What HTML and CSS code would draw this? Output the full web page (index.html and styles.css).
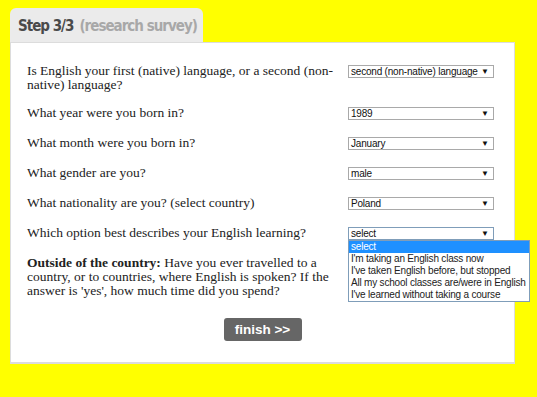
FILE: index.html
```html
<!DOCTYPE html>
<html>
<head>
<meta charset="utf-8">
<link rel="stylesheet" href="styles.css">
</head>
<body>
<div class="wrap">
  <div class="tab"><span class="step">Step 3/3</span><span class="sub">(research survey)</span></div>
  <div class="panel">
    <div class="row first">
      <div class="q">Is English your first (native) language, or a second (non-native) language?</div>
      <div class="sel">second (non-native) language<span class="arrow">▼</span></div>
    </div>
    <div class="row">
      <div class="q">What year were you born in?</div>
      <div class="sel">1989<span class="arrow">▼</span></div>
    </div>
    <div class="row">
      <div class="q">What month were you born in?</div>
      <div class="sel">January<span class="arrow">▼</span></div>
    </div>
    <div class="row">
      <div class="q">What gender are you?</div>
      <div class="sel">male<span class="arrow">▼</span></div>
    </div>
    <div class="row">
      <div class="q">What nationality are you? (select country)</div>
      <div class="sel">Poland<span class="arrow">▼</span></div>
    </div>
    <div class="row">
      <div class="q">Which option best describes your English learning?</div>
      <div class="sel open">select<span class="arrow">▼</span>
        <ul class="list">
          <li class="hl">select</li>
          <li>I'm taking an English class now</li>
          <li>I've taken English before, but stopped</li>
          <li>All my school classes are/were in English</li>
          <li>I've learned without taking a course</li>
        </ul>
      </div>
    </div>
    <div class="row">
      <div class="q"><b>Outside of the country:</b> Have you ever travelled to a country, or to countries, where English is spoken? If the answer is 'yes', how much time did you spend?</div>
    </div>
    <div class="actions"><span class="btn">finish &gt;&gt;</span></div>
  </div>
</div>
</body>
</html>
```
FILE: styles.css
```css
html, body {
  margin: 0;
  padding: 0;
  background: #ffff00;
}
.wrap {
  padding: 8px 0 0 10px;
}
.tab {
  width: 193px;
  height: 34px;
  box-sizing: border-box;
  background: #ebebeb;
  border-radius: 6px 6px 0 0;
  padding: 9px 0 0 8px;
  font-family: "DejaVu Sans Condensed", "DejaVu Sans", sans-serif;
  font-weight: bold;
  font-size: 15px;
  letter-spacing: -1px;
  white-space: nowrap;
}
.step { color: #4a4a4a; }
.sub { color: #a8a8a8; margin-left: 6px; }
.panel {
  width: 505px;
  height: 322px;
  box-sizing: border-box;
  background: #fff;
  border: 1px solid #dcdcdc;
  border-bottom-width: 2px;
  padding: 21px 0 0 16px;
  font-family: "Liberation Serif", serif;
  font-size: 13.5px;
  line-height: 14px;
  color: #222;
}
.row {
  display: flex;
  align-items: flex-start;
  gap: 11px;
  margin-bottom: 16px;
}
.row.first {
  margin-bottom: 14px;
}
.q {
  width: 310px;
}
.sel {
  position: relative;
  width: 146px;
  height: 13px;
  box-sizing: border-box;
  margin-top: 1px;
  border: 1px solid #a9a9a9;
  font-family: "Liberation Sans", Arial, sans-serif;
  font-size: 10px;
  letter-spacing: -0.2px;
  line-height: 11px;
  color: #111;
  padding-left: 2px;
}
.arrow {
  position: absolute;
  right: 4px;
  top: 0;
  font-size: 8px;
  letter-spacing: 0;
}
.sel.open { border-color: #7f9db9; }
.list {
  position: absolute;
  left: -1px;
  top: 12px;
  margin: 0;
  padding: 0;
  list-style: none;
  width: 182px;
  box-sizing: border-box;
  background: #fff;
  border: 1px solid #7f9db9;
  z-index: 2;
}
.list li {
  height: 12px;
  line-height: 12px;
  padding-left: 2px;
  white-space: nowrap;
  color: #222;
}
.list li.hl {
  background: #1e90ff;
  color: #fff;
}
.actions {
  display: flex;
  justify-content: center;
  padding-right: 16px;
  margin-top: 20px;
}
.btn {
  display: inline-block;
  width: 78px;
  height: 23px;
  box-sizing: border-box;
  background: #666;
  border-radius: 3px;
  color: #fff;
  font-family: "Liberation Sans", Arial, sans-serif;
  font-weight: bold;
  font-size: 13.5px;
  line-height: 23px;
  text-align: center;
}
```
